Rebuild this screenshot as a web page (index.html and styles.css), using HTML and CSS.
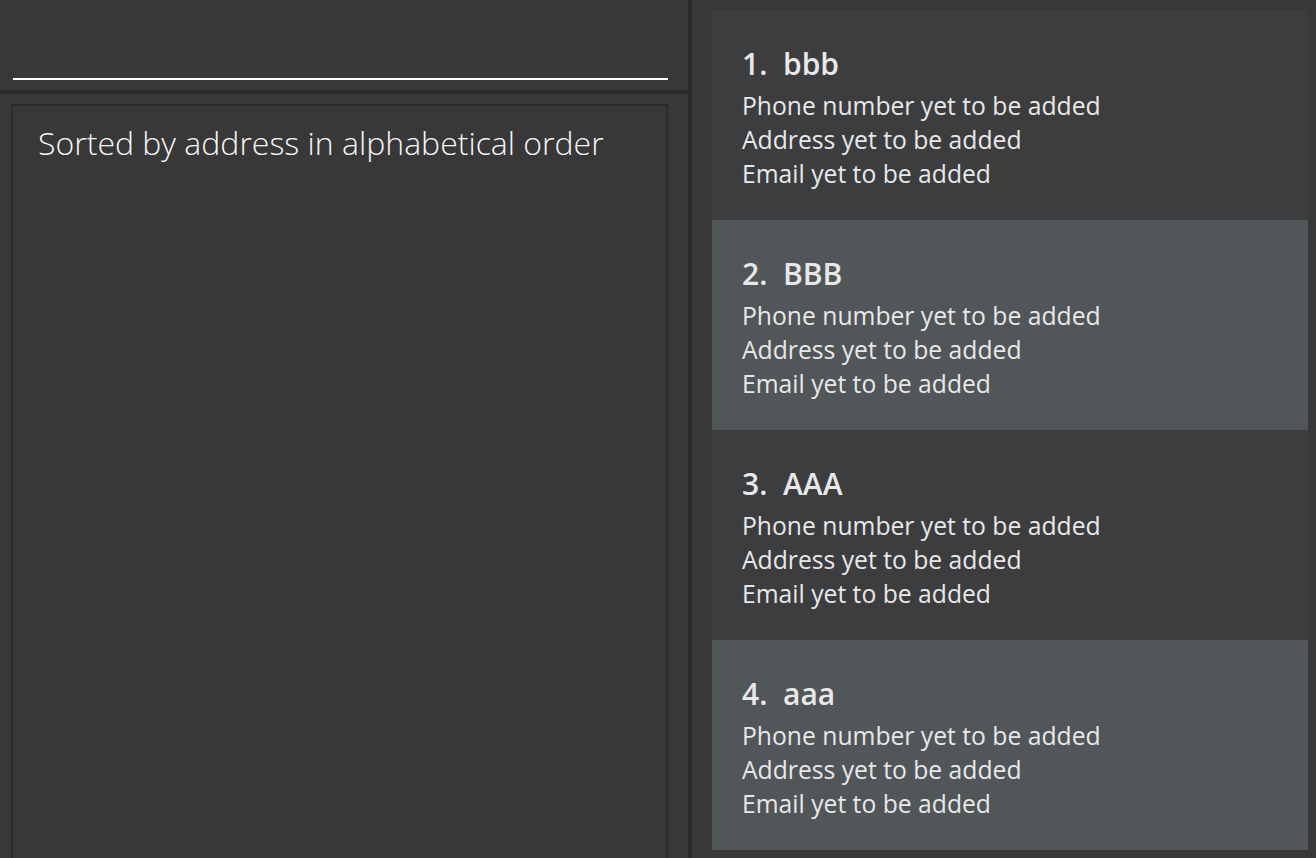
FILE: index.html
```html
<!DOCTYPE html>
<html>
<head>
<meta charset="utf-8">
<link rel="stylesheet" href="styles.css">
</head>
<body>
<div class="app">
  <div class="left">
    <div class="command">
      <div class="command-input"></div>
    </div>
    <div class="hdivider"></div>
    <div class="result-area">
      <div class="result-box">
        <div class="result-text">Sorted by address in alphabetical order</div>
      </div>
    </div>
  </div>
  <div class="vdivider"></div>
  <div class="right">
    <div class="card odd">
      <div class="card-title"><span class="idx">1.</span>bbb</div>
      <div class="card-line">Phone number yet to be added</div>
      <div class="card-line">Address yet to be added</div>
      <div class="card-line">Email yet to be added</div>
    </div>
    <div class="card even">
      <div class="card-title"><span class="idx">2.</span>BBB</div>
      <div class="card-line">Phone number yet to be added</div>
      <div class="card-line">Address yet to be added</div>
      <div class="card-line">Email yet to be added</div>
    </div>
    <div class="card odd">
      <div class="card-title"><span class="idx">3.</span>AAA</div>
      <div class="card-line">Phone number yet to be added</div>
      <div class="card-line">Address yet to be added</div>
      <div class="card-line">Email yet to be added</div>
    </div>
    <div class="card even">
      <div class="card-title"><span class="idx">4.</span>aaa</div>
      <div class="card-line">Phone number yet to be added</div>
      <div class="card-line">Address yet to be added</div>
      <div class="card-line">Email yet to be added</div>
    </div>
  </div>
</div>
</body>
</html>
```
FILE: styles.css
```css
html, body {
  margin: 0;
  padding: 0;
  background: #383838;
  width: 1316px;
  height: 858px;
  overflow: hidden;
}
.app {
  display: flex;
  height: 858px;
  font-family: "Open Sans", "Noto Sans", sans-serif;
}
.left {
  width: 688px;
  display: flex;
  flex-direction: column;
  background: #383838;
}
.command {
  height: 90px;
  box-sizing: border-box;
  padding: 78px 20px 0 13px;
}
.command-input {
  height: 2px;
  background: #ffffff;
}
.hdivider {
  height: 4px;
  background: #2b2b2b;
}
.result-area {
  flex: 1;
  padding: 10px 20px 0 11px;
  display: flex;
}
.result-box {
  flex: 1;
  border: 2px solid #2b2b2b;
  border-bottom: none;
  padding: 17px 0 0 25px;
}
.result-text {
  color: #f6f6f6;
  font-weight: 300;
  font-size: 32px;
  line-height: 40px;
}
.vdivider {
  width: 4px;
  background: #2b2b2b;
}
.right {
  flex: 1;
  padding: 10px 8px 8px 20px;
  display: flex;
  flex-direction: column;
}
.card {
  height: 210px;
  box-sizing: border-box;
  padding: 37px 0 0 30px;
  color: #e8e8e8;
}
.odd { background: #3c3d3f; }
.even { background: #515658; }
.card-title {
  font-size: 30px;
  font-weight: 600;
  line-height: 34px;
  margin-bottom: 8px;
}
.idx {
  display: inline-block;
  width: 41px;
}
.card-line {
  font-size: 24.7px;
  line-height: 34px;
}
```
